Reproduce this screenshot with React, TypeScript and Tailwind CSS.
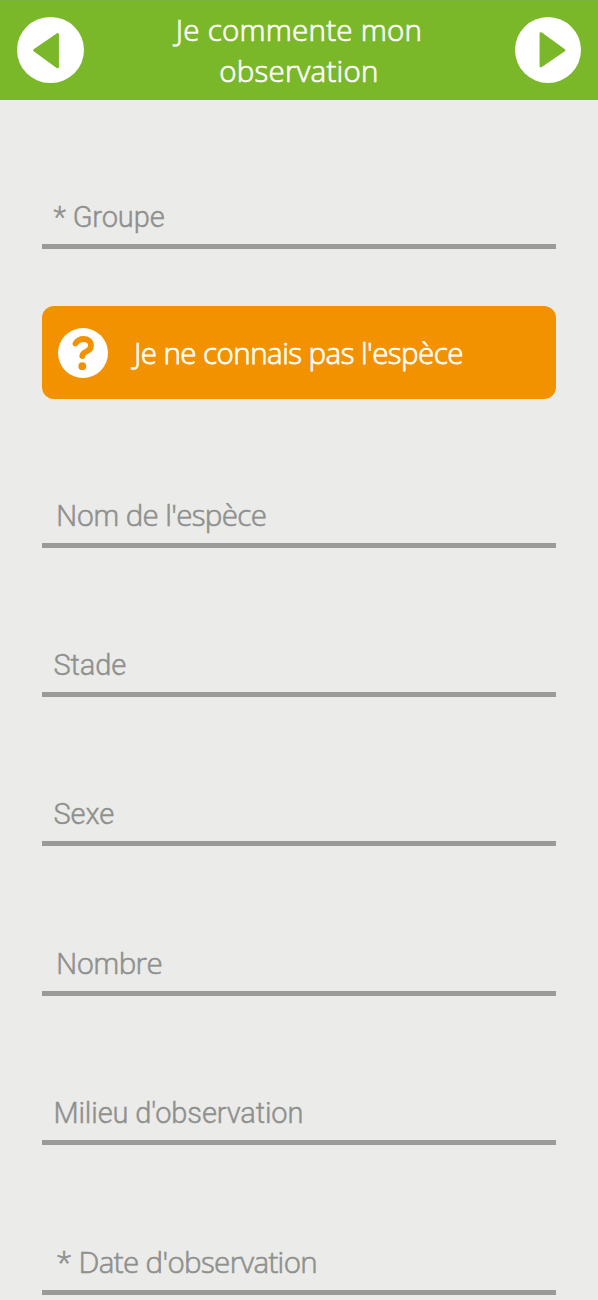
const roboto =
  "pl-[11.5px] font-['Roboto',sans-serif] font-light text-[29px] tracking-[-0.12px] [-webkit-text-stroke:0.45px_#8e908e]";
const openSans =
  "pb-px pl-[14px] font-['Open_Sans',sans-serif] font-light text-[29.5px] tracking-[-0.65px] [-webkit-text-stroke:0.65px_#8e908e]";

const fields = [
  { label: "Nom de l'espèce", height: "h-[149px]", font: openSans },
  { label: "Stade", height: "h-[149px]", font: roboto },
  { label: "Sexe", height: "h-[149px]", font: roboto },
  { label: "Nombre", height: "h-[150px]", font: openSans },
  { label: "Milieu d'observation", height: "h-[149px]", font: roboto },
  { label: "* Date d'observation", height: "h-[150px]", font: openSans },
];

type FieldProps = { label: string; height: string; font: string };

const Field = ({ label, height, font }: FieldProps) => {
  return (
    <div className={`flex flex-col justify-end border-b-5 border-[#9a9b98] pb-[7px] text-[#8e908e] ${height}`}>
      <span className={`block leading-10 ${font}`}>{label}</span>
    </div>
  );
};

const ArrowButton = ({ flip = false }: { flip?: boolean }) => {
  return (
    <button className="h-[66.5px] w-[66.5px] shrink-0 rounded-full bg-white">
      <svg viewBox="0 0 67 67" className={flip ? "rotate-180" : ""}>
        <path
          d="M17.5 33.5 L41 17.5 V50.5 Z"
          fill="#7ab829"
          stroke="#7ab829"
          strokeWidth="2.5"
          strokeLinejoin="round"
        />
      </svg>
    </button>
  );
};

const App = () => {
  return (
    <div className="h-[1300px] overflow-hidden bg-[#ebebe9]">
      <header className="flex h-[100px] items-center justify-between bg-[#7ab829] px-[17px] shadow-[inset_0_1px_0_#7cb342]">
        <ArrowButton />
        <h1 className="w-[300px] pb-px text-center font-['Open_Sans',sans-serif] text-[29.5px] font-light leading-[41px] tracking-[0.25px] text-white [-webkit-text-stroke:0.7px_white]">
          Je commente mon observation
        </h1>
        <ArrowButton flip />
      </header>
      <main className="px-[42px]">
        <Field label="* Groupe" height="h-[149px]" font={roboto} />
        <button className="mt-[57px] flex h-[93px] w-full items-center rounded-[12px] bg-[#f39200] pl-4 text-white">
          <svg viewBox="0 0 50 50" className="h-[50px] w-[50px]">
            <circle cx="25" cy="25" r="25" fill="white" />
            <path
              d="M17.5 15.5 C19.5 12.5 22 11 25.5 11 C30 11 33 13.5 33 17.5 C33 21.5 30.5 22.5 27.5 24 C25 25.3 24.3 26.2 24.3 28"
              fill="none"
              stroke="#f39200"
              strokeWidth="5.8"
              strokeLinecap="round"
            />
            <circle cx="24.3" cy="38.2" r="3.9" fill="#f39200" />
          </svg>
          <span className="ml-[26px] pt-px font-['Open_Sans',sans-serif] text-[29.5px] font-light tracking-[-0.55px] [-webkit-text-stroke:0.75px_white]">
            Je ne connais pas l'espèce
          </span>
        </button>
        {fields.map((field) => (
          <Field key={field.label} {...field} />
        ))}
      </main>
    </div>
  );
};

export default App;
